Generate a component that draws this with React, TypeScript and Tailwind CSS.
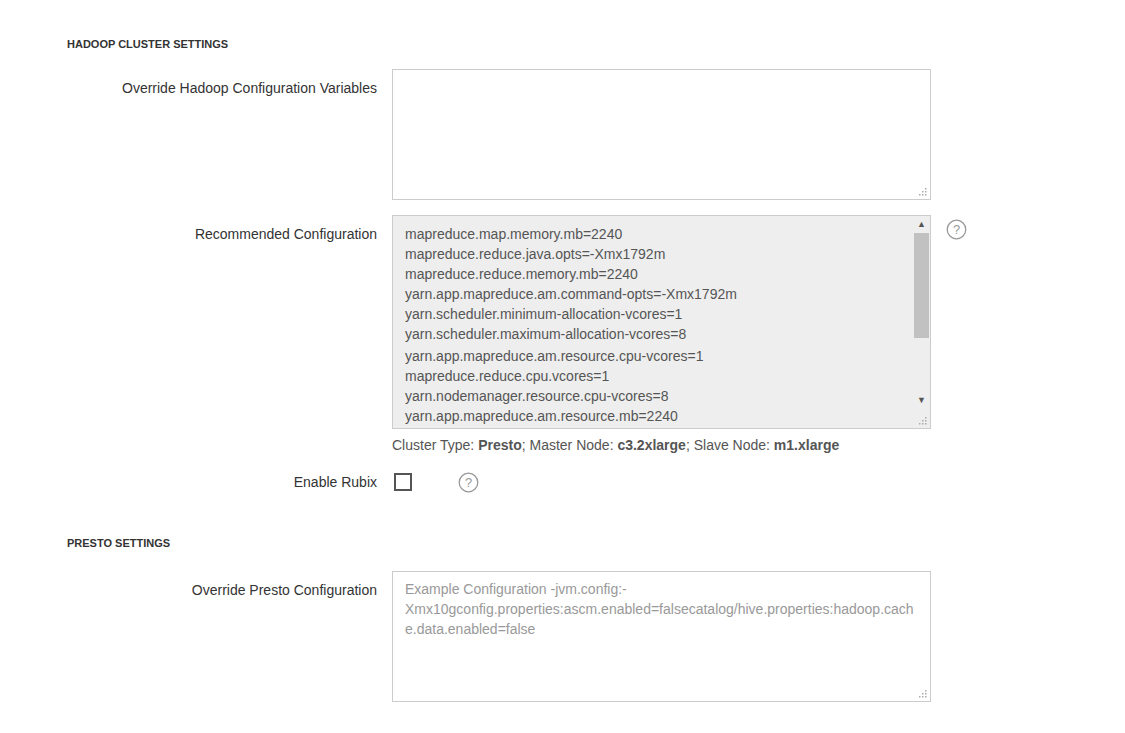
import React from "react";

const Grip = () => (
  <svg width="8" height="8" viewBox="0 0 8 8" className="absolute right-[3px] bottom-[3px]">
    {[[6,0],[6,3],[3,3],[6,6],[3,6],[0,6]].map(([x,y],i)=>(<rect key={i} x={x} y={y} width="1.5" height="1.5" fill="#aaa"/>))}
  </svg>
);

const Help = () => (
  <svg width="21" height="21" viewBox="0 0 21 21">
    <circle cx="10.5" cy="10.5" r="9.3" fill="none" stroke="#999" strokeWidth="1.3"/>
    <text x="10.5" y="15" textAnchor="middle" fontSize="13" fill="#999" fontFamily="Liberation Sans, Arial">?</text>
  </svg>
);

const lines = [
  "mapreduce.map.memory.mb=2240",
  "mapreduce.reduce.java.opts=-Xmx1792m",
  "mapreduce.reduce.memory.mb=2240",
  "yarn.app.mapreduce.am.command-opts=-Xmx1792m",
  "yarn.scheduler.minimum-allocation-vcores=1",
  "yarn.scheduler.maximum-allocation-vcores=8",
  "yarn.app.mapreduce.am.resource.cpu-vcores=1",
  "mapreduce.reduce.cpu.vcores=1",
  "yarn.nodemanager.resource.cpu-vcores=8",
  "yarn.app.mapreduce.am.resource.mb=2240",
];

export default function App() {
  return (
    <div className="w-[1125px] h-[733px] bg-white text-[14px] text-[#333] overflow-hidden" style={{ fontFamily: '"Liberation Sans", Arial, sans-serif' }}>
      <div className="pl-[67px] pt-[36px] text-[11px] font-bold text-[#333] uppercase">Hadoop Cluster Settings</div>
      <div className="flex mt-[16px]">
        <div className="w-[377px] text-right pt-[9px]">Override Hadoop Configuration Variables</div>
        <div className="ml-[15px] w-[539px] h-[131px] border border-[#ccc] relative"><Grip/></div>
      </div>
      <div className="flex mt-[15px]">
        <div className="w-[377px] text-right pt-[9px]">Recommended Configuration</div>
        <div className="ml-[15px]">
          <div className="w-[539px] h-[214px] border border-[#ccc] bg-[#eee] relative flex">
            <div className="flex-1 pl-[12px] pt-[8px] leading-[20px] text-[#555] overflow-hidden">
              {lines.map((l, i) => (<div key={i} className={i === 6 ? "mt-[2px]" : ""}>{l}</div>))}
            </div>
            <div className="w-[17px] h-[193px] flex flex-col items-center">
              <div className="h-[17px] text-[9px] leading-[17px] text-[#555]">▲</div>
              <div className="w-[15px] h-[105px] bg-[#c1c1c1]"></div>
              <div className="flex-1"></div>
              <div className="h-[17px] text-[9px] leading-[17px] text-[#555]">▼</div>
            </div>
            <Grip/>
          </div>
          <div className="mt-[6px] text-[#555]">Cluster Type: <b>Presto</b>; Master Node: <b>c3.2xlarge</b>; Slave Node: <b>m1.xlarge</b></div>
        </div>
        <div className="ml-[15px] pt-[4px]"><Help/></div>
      </div>
      <div className="flex items-center mt-[16px]">
        <div className="w-[377px] text-right">Enable Rubix</div>
        <div className="ml-[17px] w-[18px] h-[18px] border-2 border-[#555]"></div>
        <div className="ml-[46px]"><Help/></div>
      </div>
      <div className="pl-[67px] mt-[42px] text-[11px] font-bold uppercase">Presto Settings</div>
      <div className="flex mt-[20px]">
        <div className="w-[377px] text-right pt-[9px]">Override Presto Configuration</div>
        <div className="ml-[15px] w-[539px] h-[131px] border border-[#ccc] relative pl-[12px] pr-[8px] pt-[7px] leading-[20px] text-[#999] break-all">
          Example Configuration -jvm.config:-<br/>Xmx10gconfig.properties:ascm.enabled=falsecatalog/hive.properties:hadoop.cache.data.enabled=false
          <Grip/>
        </div>
      </div>
    </div>
  );
}
